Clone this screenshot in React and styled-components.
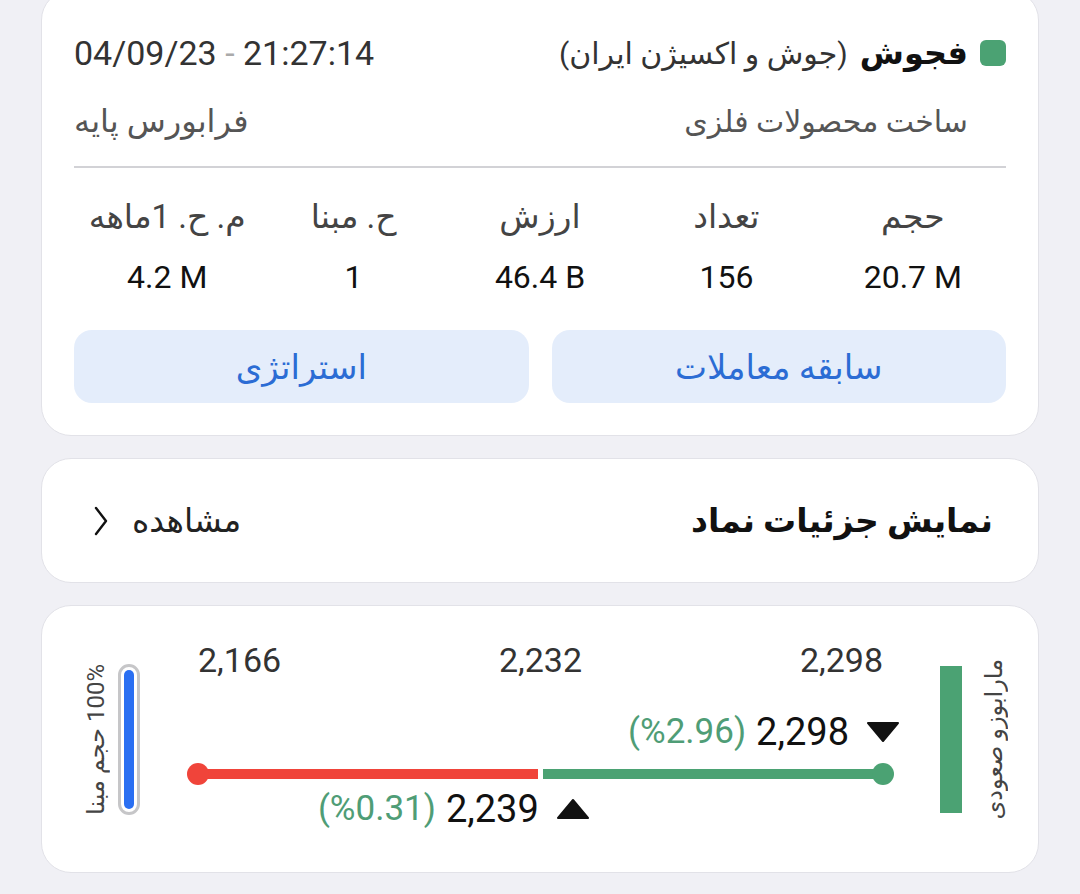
import React from 'react'
import styled, { createGlobalStyle } from 'styled-components';

const GlobalStyle = createGlobalStyle`
  body {
    margin: 0;
    background: #f0f0f5;
    font-family: "Roboto", "DejaVu Sans", sans-serif;
    color: #1a1a1a;
  }
`;

const Page = styled.div`
  direction: rtl;
  padding: 0 41px 20px;
  display: flex;
  flex-direction: column;
  gap: 22px;
`;

const Card = styled.div`
  background: #fff;
  border: 1px solid #e2e2e8;
  border-radius: 30px;
`;

const InfoCard = styled(Card)`
  margin-top: -10px;
  padding: 40px 32px 32px;
`;

const Row = styled.div`
  display: flex;
  align-items: center;
  justify-content: space-between;
  height: 44px;
  margin-top: ${({ $top }) => $top || 0}px;
`;

const TitleGroup = styled.div`
  display: flex;
  align-items: center;
  gap: 12px;
`;

const Square = styled.div`
  width: 26px;
  height: 26px;
  border-radius: 6px;
  background: #4ba273;
`;

const Symbol = styled.span`
  font-size: 32px;
  font-weight: 700;
  color: #111;
`;

const Company = styled.span`
  font-size: 30px;
  color: #333;
`;

const Stamp = styled.span`
  direction: ltr;
  unicode-bidi: isolate;
  font-size: 34px;
  color: #333;
  span { color: #aaa; }
`;

const SubText = styled.span`
  font-size: ${({ $size }) => $size || 30}px;
  color: #555;
  padding-right: ${({ $indent }) => $indent || 0}px;
`;

const Divider = styled.div`
  margin-top: 23px;
  height: 2px;
  background: #d2d2d6;
`;

const Stats = styled.div`
  display: grid;
  grid-template-columns: repeat(5, 1fr);
  margin-top: 29px;
  row-gap: 20px;
  text-align: center;
`;

const StatLabel = styled.div`
  font-size: 33px;
  line-height: 40px;
  color: #444;
`;

const StatValue = styled.div`
  direction: ltr;
  font-size: 32px;
  line-height: 40px;
  color: #111;
`;

const Actions = styled.div`
  display: grid;
  grid-template-columns: 1fr 1fr;
  gap: 23px;
  margin-top: 33px;
`;

const ActionButton = styled.button`
  height: 73px;
  border: none;
  border-radius: 18px;
  background: #e4edfb;
  color: #2b6cd4;
  font-family: inherit;
  font-size: 34px;
`;

const LinkCard = styled(Card)`
  height: 123px;
  padding: 0 45px 0 52px;
  display: flex;
  align-items: center;
  justify-content: space-between;
`;

const LinkTitle = styled.span`
  font-size: 33px;
  font-weight: 600;
  color: #111;
`;

const More = styled.span`
  display: flex;
  align-items: center;
  gap: 24px;
  font-size: 33px;
  color: #222;
`;

const ChartCard = styled(Card)`
  height: 266px;
  padding: 0 31px 0 41px;
  display: flex;
  align-items: center;
  direction: ltr;
`;

const Side = styled.div`
  display: flex;
  align-items: center;
  gap: ${({ $gap }) => $gap}px;
`;

const VerticalText = styled.div`
  writing-mode: vertical-rl;
  transform: rotate(180deg);
  direction: rtl;
  font-size: 24px;
  width: 26px;
  line-height: 26px;
  color: #444;
  white-space: nowrap;
`;

const VolumeOutline = styled.div`
  width: 10px;
  height: 139px;
  border: 3px solid #c6c6c8;
  border-radius: 11px;
  padding: 3px;
  box-sizing: content-box;
  display: flex;
`;

const VolumeFill = styled.div`
  flex: 1;
  border-radius: 6px;
  background: #2a6ff2;
`;

const CandleBar = styled.div`
  width: 22px;
  height: 147px;
  background: #4ba273;
`;

const Chart = styled.div`
  flex: 1;
  margin: -6px 46px 0 47px;
  display: flex;
  flex-direction: column;
`;

const Scale = styled.div`
  display: flex;
  justify-content: space-between;
  padding: 0 11px;
  font-size: 34px;
  line-height: 36px;
  color: #333;
`;

const MarkerLane = styled.div`
  position: relative;
  height: 44px;
  margin: ${({ $m }) => $m};
  margin-left: 11px;
  margin-right: 11px;
`;

const Marker = styled.div`
  position: absolute;
  top: 0;
  display: flex;
  align-items: center;
  height: 44px;
  white-space: nowrap;
`;

const Change = styled.span`
  font-size: 35px;
  color: #4f9d76;
  margin-right: 10px;
`;

const Price = styled.span`
  font-size: 38px;
  color: #111;
  margin-right: 18px;
`;

const Track = styled.div`
  display: flex;
  gap: 5px;
  padding: 0 11px;
  margin-top: 9px;
  height: 22px;
  align-items: center;
`;

const Segment = styled.div`
  flex: 1;
  height: 10px;
  position: relative;
  background: ${({ $color }) => $color};
  &::before {
    content: "";
    position: absolute;
    top: -6px;
    ${({ $end }) => $end}: -11px;
    width: 22px;
    height: 22px;
    border-radius: 50%;
    background: ${({ $color }) => $color};
  }
`;

const Triangle = ({ up }) => (
  <svg width="32" height="22" viewBox="0 0 32 22">
    <path d={up ? 'M16 2 L31 20 L1 20 Z' : 'M1 2 L31 2 L16 20 Z'} fill="#111" strokeLinejoin="round" stroke="#111" strokeWidth="2" />
  </svg>
);

const Chevron = () => (
  <svg width="14" height="30" viewBox="0 0 14 30">
    <path d="M2 2 L12 15 L2 28" fill="none" stroke="#111" strokeWidth="2.4" strokeLinecap="round" strokeLinejoin="round" />
  </svg>
);

const low = 2166;
const high = 2298;
const pos = (v) => ((v - low) / (high - low)) * 100;

const stats = [
  ['حجم', '20.7 M'],
  ['تعداد', '156'],
  ['ارزش', '46.4 B'],
  ['ح. مبنا', '1'],
  ['م. ح. 1ماهه', '4.2 M'],
];

const PriceMarker = ({ value, text, change, up, nudge = 16 }) => (
  <Marker style={{ right: `calc(${100 - pos(value)}% - ${nudge}px)` }}>
    <Change>({change})</Change>
    <Price>{text}</Price>
    <Triangle up={up} />
  </Marker>
);

export default function App() {
  return (
    <>
      <GlobalStyle />
      <Page>
        <InfoCard>
          <Row>
            <TitleGroup>
              <Square />
              <Symbol>فجوش</Symbol>
              <Company>(جوش و اکسیژن ایران)</Company>
            </TitleGroup>
            <Stamp>04/09/23 <span>-</span> 21:27:14</Stamp>
          </Row>
          <Row $top={24}>
            <SubText $indent={38}>ساخت محصولات فلزی</SubText>
            <SubText $size={32}>فرابورس پایه</SubText>
          </Row>
          <Divider />
          <Stats>
            {stats.map(([label]) => <StatLabel key={label}>{label}</StatLabel>)}
            {stats.map(([label, value]) => <StatValue key={label}>{value}</StatValue>)}
          </Stats>
          <Actions>
            <ActionButton>سابقه معاملات</ActionButton>
            <ActionButton>استراتژی</ActionButton>
          </Actions>
        </InfoCard>

        <LinkCard>
          <LinkTitle>نمایش جزئیات نماد</LinkTitle>
          <More>
            مشاهده
            <Chevron />
          </More>
        </LinkCard>

        <ChartCard>
          <Side $gap={9}>
            <VerticalText>100% حجم مبنا</VerticalText>
            <VolumeOutline><VolumeFill /></VolumeOutline>
          </Side>
          <Chart>
            <Scale>
              <span>2,166</span>
              <span>2,232</span>
              <span>2,298</span>
            </Scale>
            <MarkerLane $m="32px 0 0">
              <PriceMarker value={2298} text="2,298" change="%2.96" />
            </MarkerLane>
            <Track>
              <Segment $color="#f0443a" $end="left" />
              <Segment $color="#4ba273" $end="right" />
            </Track>
            <MarkerLane $m="2px 0 0">
              <PriceMarker value={2239} text="2,239" change="%0.31" up nudge={12} />
            </MarkerLane>
          </Chart>
          <Side $gap={19}>
            <CandleBar />
            <VerticalText>مارابوزو صعودی</VerticalText>
          </Side>
        </ChartCard>
      </Page>
    </>
  );
}
